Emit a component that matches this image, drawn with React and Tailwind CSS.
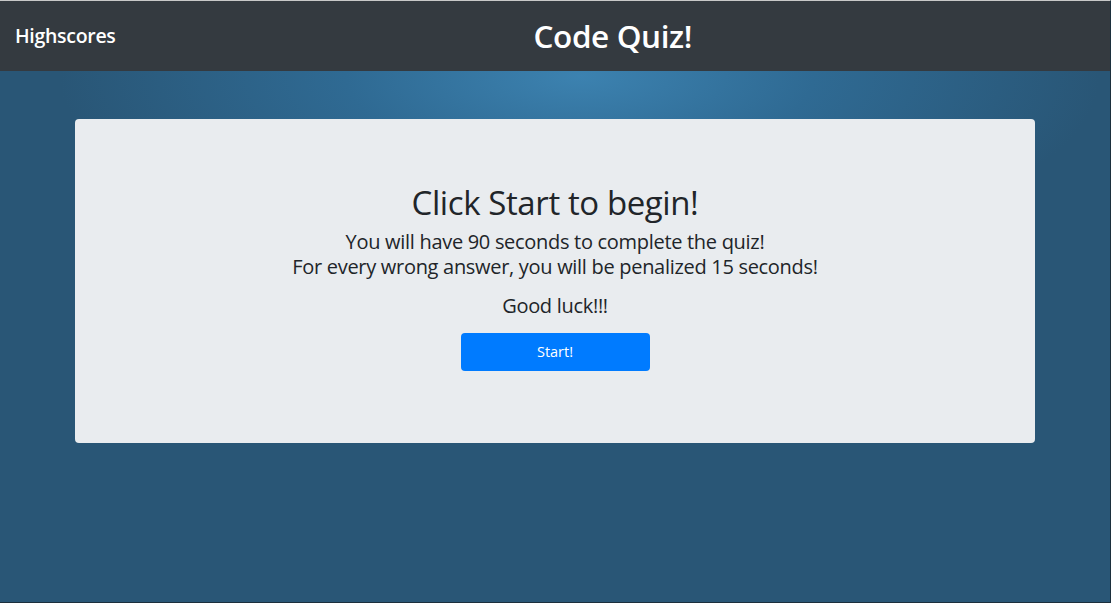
export default function App() {
  return (
    <div
      className="h-[603px] w-[1111px] overflow-hidden border-t border-t-[#c8c8c8] border-r border-b border-r-[#1c2f3c] border-b-[#1c2f3c] bg-[radial-gradient(ellipse_520px_190px_at_580px_75px,#3c82b0_0%,#2f6a93_45%,#295676_100%)] text-[#212529]"
      style={{ fontFamily: '"Open Sans", "Noto Sans", sans-serif' }}
    >
      {/* Navbar */}
      <nav className="flex h-[70px] items-center bg-[#343a40] pl-[15px]">
        <a className="text-[19.5px] font-semibold tracking-[-0.3px] text-white">Highscores</a>
        <h1 className="flex-1 text-center text-[31.5px] font-semibold tracking-[-0.4px] text-white">
          Code Quiz!
        </h1>
      </nav>

      {/* Jumbotron */}
      <div className="mx-auto mt-[48px] w-[960px] rounded-[4px] bg-[#e9ecef] px-8 pb-[72px] pt-[65px] text-center">
        <h2 className="mb-[7px] text-[33px] leading-[38px] tracking-[-0.4px]">Click Start to begin!</h2>
        <h5 className="text-[20px] leading-[25px] tracking-[-0.3px]">You will have 90 seconds to complete the quiz!</h5>
        <h5 className="text-[20px] leading-[25px] tracking-[-0.3px]">For every wrong answer, you will be penalized 15 seconds!</h5>
        <h5 className="mt-[14px] text-[20px] leading-[25px] tracking-[-0.3px]">Good luck!!!</h5>
        <button className="mt-[15px] h-[38px] w-[189px] rounded-[4px] bg-[#007bff] text-[14.5px] text-white">
          Start!
        </button>
      </div>
    </div>
  )
}
